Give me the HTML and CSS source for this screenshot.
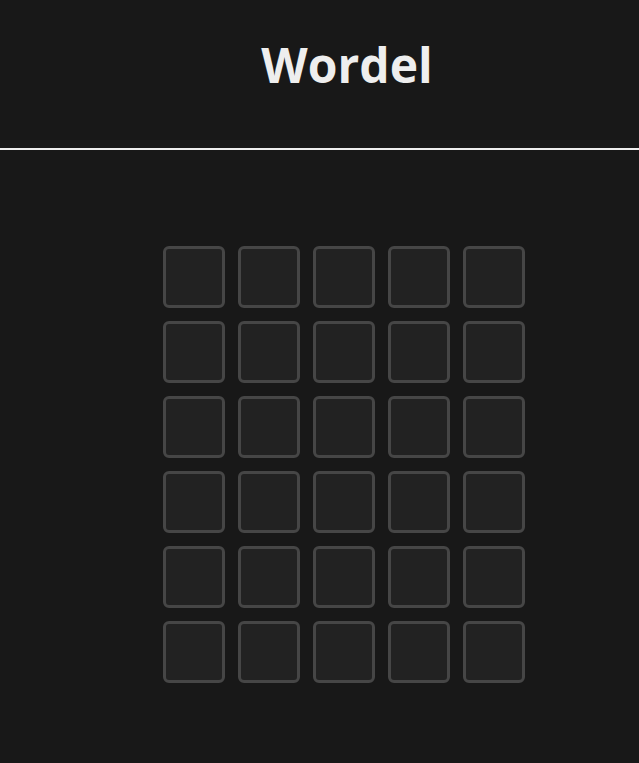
FILE: index.html
```html
<!DOCTYPE html>
<html>
<head>
<meta charset="utf-8">
<link rel="stylesheet" href="styles.css">
</head>
<body>
<header class="header">
  <h1 class="title">Wordel</h1>
</header>
<main class="main">
  <div class="board">
    <div class="tile"></div><div class="tile"></div><div class="tile"></div><div class="tile"></div><div class="tile"></div>
    <div class="tile"></div><div class="tile"></div><div class="tile"></div><div class="tile"></div><div class="tile"></div>
    <div class="tile"></div><div class="tile"></div><div class="tile"></div><div class="tile"></div><div class="tile"></div>
    <div class="tile"></div><div class="tile"></div><div class="tile"></div><div class="tile"></div><div class="tile"></div>
    <div class="tile"></div><div class="tile"></div><div class="tile"></div><div class="tile"></div><div class="tile"></div>
    <div class="tile"></div><div class="tile"></div><div class="tile"></div><div class="tile"></div><div class="tile"></div>
  </div>
</main>
</body>
</html>
```
FILE: styles.css
```css
html, body {
  margin: 0;
  padding: 0;
  background: #181818;
  color: #eeeeee;
  font-family: "Open Sans", "Noto Sans", sans-serif;
}
.header {
  height: 148px;
  border-bottom: 2px solid #eeeeee;
  display: flex;
  align-items: center;
  justify-content: center;
  padding-left: 55px;
  box-sizing: content-box;
}
.title {
  margin: 0 0 18px 0;
  font-size: 48px;
  font-weight: 700;
  line-height: 1;
  color: #eeeeee;
}
.main {
  display: flex;
  justify-content: center;
  padding-left: 49px;
  padding-top: 96px;
}
.board {
  display: grid;
  grid-template-columns: repeat(5, 62px);
  grid-auto-rows: 62px;
  gap: 13px;
}
.tile {
  box-sizing: border-box;
  border: 3px solid #464646;
  border-radius: 6px;
  background: #222222;
}
```
